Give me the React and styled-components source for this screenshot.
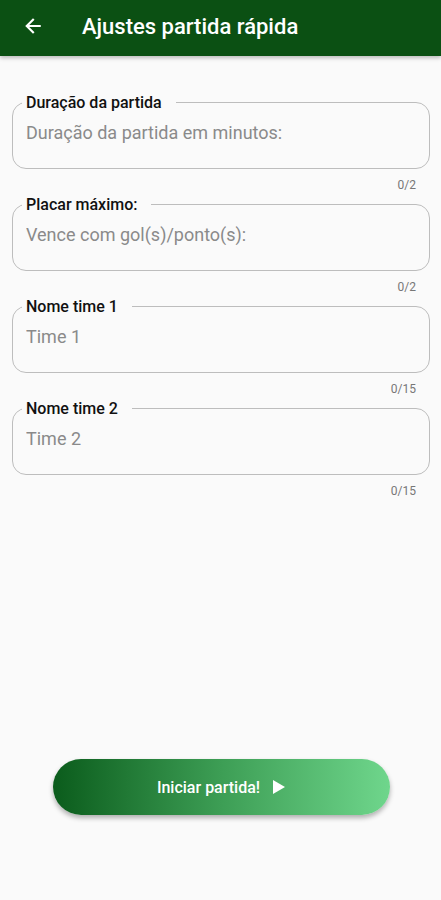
import styled, { createGlobalStyle } from 'styled-components';

const fields = [
  { label: 'Duração da partida', placeholder: 'Duração da partida em minutos:', max: 2 },
  { label: 'Placar máximo:', placeholder: 'Vence com gol(s)/ponto(s):', max: 2 },
  { label: 'Nome time 1', placeholder: 'Time 1', max: 15 },
  { label: 'Nome time 2', placeholder: 'Time 2', max: 15 },
];

function App() {
  return (
    <>
      <GlobalStyle />
      <Screen>
        <AppBar>
          <BackButton aria-label="Voltar">
            <svg width="20" height="20" viewBox="0 0 24 24" fill="none">
              <path d="M20 12H5M12 4.5 4.5 12 12 19.5" stroke="#fff" strokeWidth="2.6" strokeLinecap="square" />
            </svg>
          </BackButton>
          <Title>Ajustes partida rápida</Title>
        </AppBar>
        <Form>
          {fields.map((f) => (
            <Field key={f.label}>
              <Box>
                <Legend>{f.label}</Legend>
                <Input placeholder={f.placeholder} />
              </Box>
              <Counter>0/{f.max}</Counter>
            </Field>
          ))}
        </Form>
        <Footer>
          <StartButton>
            Iniciar partida!
            <svg width="14" height="16" viewBox="0 0 14 16">
              <path d="M1 1 13 8 1 15Z" fill="#fff" />
            </svg>
          </StartButton>
        </Footer>
      </Screen>
    </>
  );
}

const GlobalStyle = createGlobalStyle`
  body {
    margin: 0;
    background: #fafafa;
    font-family: Roboto, "Noto Sans", sans-serif;
  }
`;

const Screen = styled.div`
  width: 441px;
  height: 900px;
  display: flex;
  flex-direction: column;
  background: #fafafa;
`;

const AppBar = styled.header`
  height: 56px;
  flex-shrink: 0;
  display: flex;
  align-items: center;
  background: #0b5013;
  box-shadow: 0 2px 4px rgba(0, 0, 0, 0.25);
`;

const BackButton = styled.button`
  width: 66px;
  height: 56px;
  border: 0;
  background: none;
  padding: 0 0 4px 0;
  display: flex;
  align-items: center;
  justify-content: center;
  margin-right: 16px;
`;

const Title = styled.h1`
  margin: 0 0 4px 0;
  color: #fff;
  font-size: 22px;
  font-weight: 500;
`;

const Form = styled.div`
  padding: 37px 11px 0 12px;
  display: flex;
  flex-direction: column;
  gap: 3px;
`;

const Field = styled.div`
  display: flex;
  flex-direction: column;
`;

const Box = styled.fieldset`
  margin: 0;
  border: 1px solid #bdbdbd;
  border-radius: 14px;
  padding: 10px 13px 25px 13px;
`;

const Legend = styled.legend`
  padding: 0 14px 0 4px;
  margin-left: -4px;
  font-size: 16px;
  line-height: 19px;
  font-weight: 500;
  color: #111;
`;

const Input = styled.input`
  border: 0;
  background: none;
  outline: none;
  padding: 0;
  width: 100%;
  font-family: inherit;
  font-size: 18px;
  line-height: 21px;
  color: #222;
  &::placeholder {
    color: #8a8a8a;
  }
`;

const Counter = styled.span`
  align-self: flex-end;
  margin: 9px 14px 0 0;
  font-size: 12px;
  line-height: 14px;
  color: #777;
`;

const Footer = styled.div`
  margin-top: auto;
  padding: 0 51px 85px 53px;
`;

const StartButton = styled.button`
  width: 100%;
  height: 56px;
  border: 0;
  border-radius: 28px;
  background: linear-gradient(90deg, #0b5c1c 0%, #3d9e55 50%, #6fd68c 100%);
  box-shadow: 0 3px 5px rgba(0, 0, 0, 0.3);
  color: #fff;
  font-family: inherit;
  font-size: 16px;
  font-weight: 500;
  display: flex;
  align-items: center;
  justify-content: center;
  gap: 12px;
`;

export default App;
